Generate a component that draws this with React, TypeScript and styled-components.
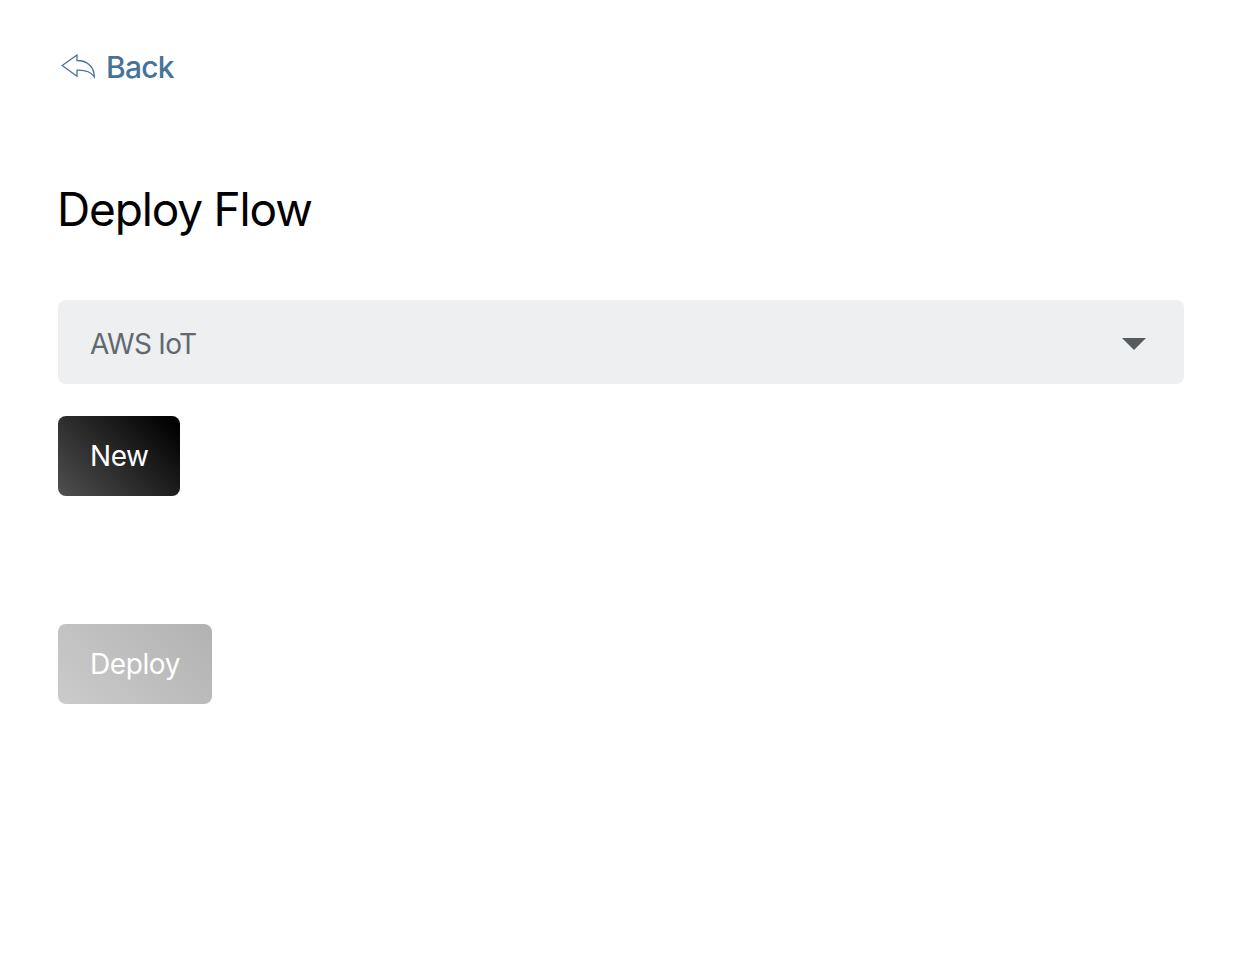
import React from "react";
import styled, { createGlobalStyle } from "styled-components";

const GlobalStyle = createGlobalStyle`
  * {
    box-sizing: border-box;
  }

  body {
    margin: 0;
    background: #fff;
    color: #000;
    font-family: Inter, "Liberation Sans", sans-serif;
  }
`;

const Page = styled.main`
  display: flex;
  flex-direction: column;
  align-items: flex-start;
  min-height: 958px;
  padding: 47px 72px 0 58px;
`;

const BackLink = styled.a`
  display: flex;
  align-items: center;
  gap: 7px;
  height: 40px;
  color: #457499;
  font-size: 30px;
  font-weight: 450;
  letter-spacing: -0.8px;
  text-decoration: none;
`;

const BackIcon = styled.svg`
  width: 41px;
  height: 32px;
`;

const Title = styled.h1`
  margin: 92px 0 61px -1px;
  height: 60px;
  font-size: 46px;
  font-weight: 430;
  line-height: 60px;
  letter-spacing: -1.17px;
  white-space: nowrap;
`;

const Select = styled.div`
  display: flex;
  align-items: center;
  justify-content: space-between;
  width: 100%;
  height: 84px;
  padding: 4px 38px 0 32px;
  border-radius: 8px;
  background: #eeeff1;
  color: #60696f;
  font-size: 28px;
  font-weight: 430;
  letter-spacing: -0.7px;
`;

const Caret = styled.svg`
  width: 24px;
  height: 12px;
  fill: #555b5e;
`;

const Button = styled.button<{ $width: number; $top: number }>`
  width: ${(props) => props.$width}px;
  height: 80px;
  margin-top: ${(props) => props.$top}px;
  padding: 0 0 0 32px;
  border: 0;
  border-radius: 8px;
  background: linear-gradient(45deg, #505050, #000 95%);
  color: #fff;
  font-family: inherit;
  font-size: 28px;
  font-weight: 430;
  letter-spacing: -0.4px;
  text-align: left;

  &:disabled {
    background: linear-gradient(45deg, #cbcbcb, #b2b2b2);
  }
`;

const App = () => {
  return (
    <>
      <GlobalStyle />
      <Page>
        <BackLink href="#">
          <BackIcon viewBox="0 0 41 32" fill="none" stroke="#457499" strokeWidth="1.3">
            <path d="M4.2 14.5 L19 4 V9.5 C29 9.5 36 15.5 36.3 25.8 C33 21 27 18.8 19 19.2 V25.2 Z" />
          </BackIcon>
          Back
        </BackLink>
        <Title>Deploy Flow</Title>
        <Select>
          AWS IoT
          <Caret viewBox="0 0 24 12">
            <path d="M0 0H24L12 12Z" />
          </Caret>
        </Select>
        <Button $width={122} $top={32}>New</Button>
        <Button $width={154} $top={128} disabled>Deploy</Button>
      </Page>
    </>
  );
};

export default App;
